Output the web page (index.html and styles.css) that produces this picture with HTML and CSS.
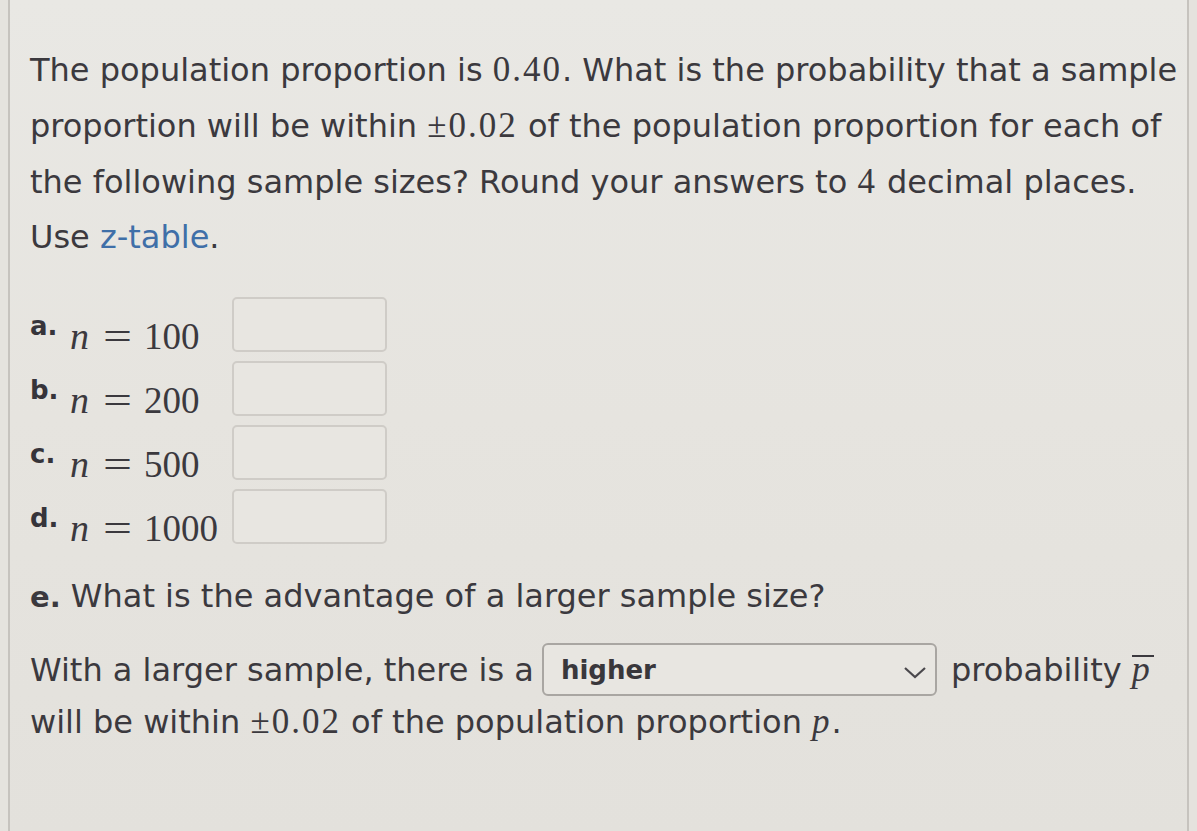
FILE: index.html
```html
<!DOCTYPE html>
<html>
<head>
<meta charset="utf-8">
<link rel="stylesheet" href="styles.css">
</head>
<body>
<div class="frame">
  <p class="question">The population proportion is <span class="m">0.40</span>. What is the probability that a sample<br>proportion will be within <span class="m">±0.02</span> of the population proportion for each of<br>the following sample sizes? Round your answers to <span class="m">4</span> decimal places.<br>Use <span class="link">z-table</span>.</p>

  <div class="parts">
    <div class="lbl"><b class="letter">a.</b><span class="mb"><i>n</i><span class="eq">=</span>100</span></div>
    <div class="box"></div>
    <div class="lbl"><b class="letter">b.</b><span class="mb"><i>n</i><span class="eq">=</span>200</span></div>
    <div class="box"></div>
    <div class="lbl"><b class="letter">c.</b><span class="mb"><i>n</i><span class="eq">=</span>500</span></div>
    <div class="box"></div>
    <div class="lbl"><b class="letter">d.</b><span class="mb"><i>n</i><span class="eq">=</span>1000</span></div>
    <div class="box"></div>
  </div>

  <p class="epart"><b class="eletter">e.</b> What is the advantage of a larger sample size?</p>

  <div class="answer">
    <div class="line1">
      <span>With a larger sample, there is a</span>
      <div class="select">
        <span class="sel-text">higher</span>
        <svg class="chev" width="24" height="13" viewBox="0 0 24 13"><polyline points="2,2 12,11 22,2" fill="none" stroke="#4a484c" stroke-width="2.2"/></svg>
      </div>
      <span>probability <span class="m pbar"><i>p</i></span></span>
    </div>
    <div class="line2">will be within <span class="m">±0.02</span> of the population proportion <span class="m"><i>p</i></span>.</div>
  </div>
</div>
</body>
</html>
```
FILE: styles.css
```css
html, body {
  margin: 0;
  padding: 0;
}
body {
  background: #e5e3de;
  font-family: "DejaVu Sans", Verdana, sans-serif;
  color: #3b393e;
  width: 1197px;
  height: 831px;
  overflow: hidden;
}
.frame {
  margin-left: 8px;
  width: 1181px;
  height: 831px;
  box-sizing: border-box;
  border-left: 2px solid #c6c3be;
  border-right: 2px solid #c6c3be;
  padding: 42px 0 0 20px;
  background: linear-gradient(180deg, #e9e8e4 0%, #e6e4df 50%, #e3e1dc 100%);
}
.question {
  margin: 0;
  font-size: 32px;
  line-height: 55px;
  white-space: nowrap;
}
.m {
  font-family: "Liberation Serif", "Times New Roman", serif;
  font-size: 35px;
  letter-spacing: 2px;
}
.link {
  color: #3f6fa8;
}
.parts {
  display: grid;
  grid-template-columns: auto 155px;
  column-gap: 14px;
  row-gap: 9px;
  margin-top: 32px;
  width: max-content;
}
.lbl {
  display: flex;
  align-items: flex-end;
  height: 55px;
}
.letter {
  font-size: 26px;
  line-height: 26px;
  color: #36343a;
  margin-bottom: 13px;
  width: 40px;
}
.mb {
  font-family: "Liberation Serif", "Times New Roman", serif;
  font-size: 37px;
  line-height: 37px;
  margin-bottom: -3px;
}
.mb i {
  font-size: 38px;
}
.eq {
  display: inline-block;
  transform: scaleX(1.39);
  margin: 0 16px 0 18px;
}
.box {
  height: 55px;
  box-sizing: border-box;
  border: 2px solid #cfccc7;
  border-radius: 5px;
  background: #e8e6e1;
}
.epart {
  margin: 25px 0 0;
  font-size: 32px;
  line-height: 55px;
}
.eletter {
  font-size: 29px;
}
.answer {
  margin-top: 17px;
  font-size: 32px;
}
.line1 {
  display: flex;
  align-items: center;
  height: 55px;
}
.select {
  display: flex;
  align-items: center;
  justify-content: space-between;
  width: 395px;
  height: 53px;
  box-sizing: border-box;
  border: 2px solid #a9a6a2;
  border-radius: 6px;
  margin: 0 14px 0 8px;
  padding: 0 8px 0 17px;
  background: #e8e6e1;
}
.sel-text {
  font-weight: bold;
  font-size: 26px;
  color: #39373b;
}
.chev {
  margin-top: 6px;
}
.pbar i {
  display: inline-block;
  line-height: 24px;
  border-top: 2px solid currentColor;
  font-size: 36px;
  padding-right: 2px;
}
.line2 {
  line-height: 55px;
  white-space: nowrap;
  margin-top: -3px;
}
```
